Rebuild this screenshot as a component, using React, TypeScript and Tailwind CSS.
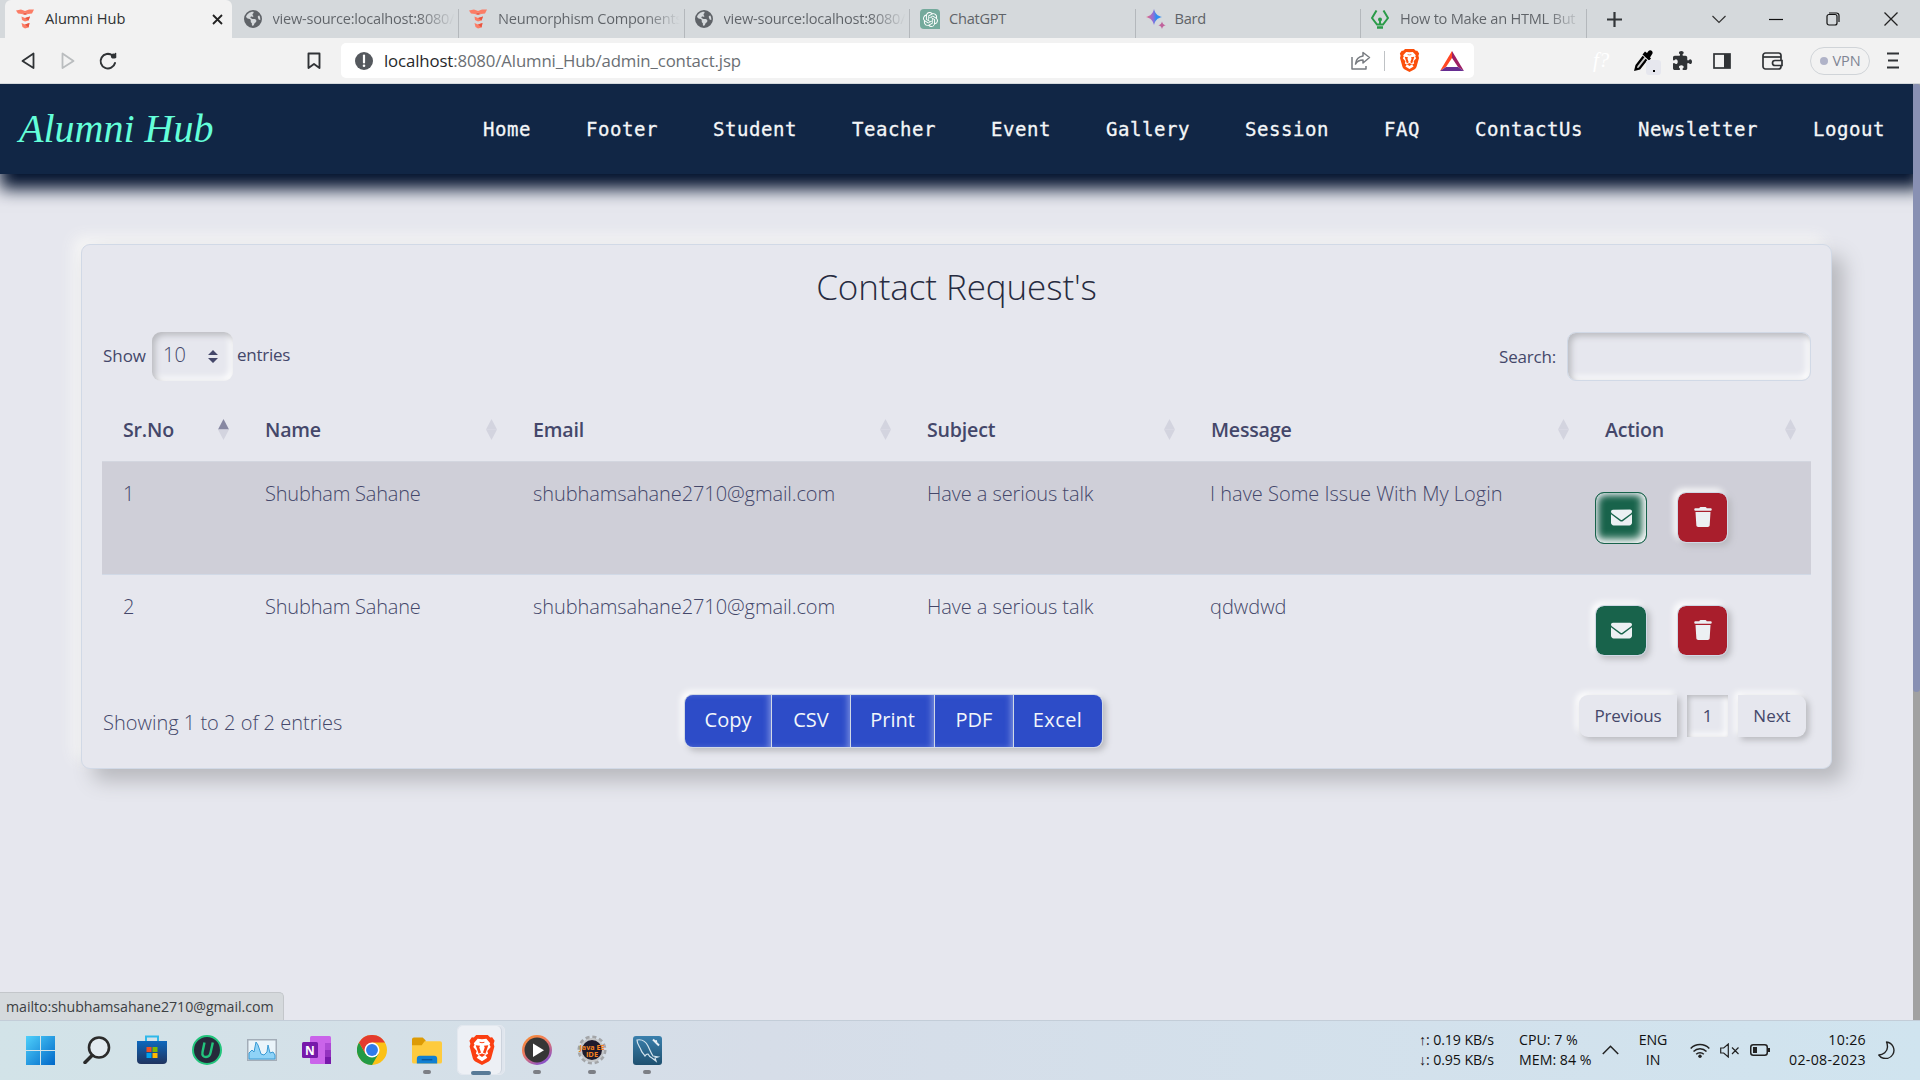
import React from "react";
import { FaEnvelope, FaTrash, FaEarthAmericas, FaPuzzlePiece } from "react-icons/fa6";
import { SiOpenai } from "react-icons/si";

const NAV = ["Home", "Footer", "Student", "Teacher", "Event", "Gallery", "Session", "FAQ", "ContactUs", "Newsletter", "Logout"];

function Creative() {
  return (
    <svg width="18" height="20" viewBox="0 0 18 20">
      <path d="M0 1.500 5 .5l4 1.500 4-1.500h5l-2 4-4 .5-3-1.500L6 5 2 4.500z" fill="#fb7d66" />
      <path d="M6 5l3-1.500L12 5l-3 1z" fill="#f05f49" />
      <path d="M5.500 7.500 9 9l5-1.500-1.500 4L9 12.500l-3-1.500z" fill="#fb7d66" />
      <path d="M9 9l5-1.500-1.500 4z" fill="#e8543f" />
      <path d="M5.500 14 9 15.500l4.500-1.500-1 4.500L9 19.500l-2.500-1.500z" fill="#fb7d66" />
      <path d="M9 15.500l4.500-1.500-1 4.500z" fill="#e8543f" />
    </svg>
  );
}
function Lion({ w, h, color }: { w: number; h: number; color: string }) {
  return (
    <svg width={w} height={h} viewBox="0 0 26 31">
      <path d="M7 0h12l2.500 2.500 2-.3L26 6l-1 3 .8 3-3.300 12c-.5 1.500-1.200 2.300-2.500 3.300L13 31l-7-3.700c-1.300-1-2-1.800-2.500-3.300L.2 12 1 9 0 6l2.500-3.800 2 .3z" fill={color} />
      <path d="M13 4.500 17.500 4l4 4.500-.8 1.500 1.300 2.500-3.500 4 .8 3-2.800 1.500 2 2.500L13 27l-5.500-3.500 2-2.500L6.700 19.500l.8-3-3.500-4L5.300 10l-.8-1.500 4-4.500z" fill="#fff" />
      <path d="M6.500 10.500 11 11l-.8 2L12 18l-2.500 1.500L8 15zM19.500 10.500 15 11l.8 2L14 18l2.500 1.500L18 15z" fill={color} />
      <path d="M9.500 20.500 13 19l3.500 1.500L13 22.800z" fill={color} />
      <path d="M10.500 7.500 13 8l2.500-.5" stroke={color} strokeWidth="1" fill="none" />
    </svg>
  );
}
function Globe() {
  return <FaEarthAmericas size={18} color="#5f6368" />;
}
function Gpt() {
  return (
    <span className="flex h-5 w-5 items-center justify-center rounded-[4px] rounded-br-none bg-[#74aa9c]">
      <SiOpenai size={15} color="#ffffff" />
    </span>
  );
}
function BardIcon() {
  return (
    <svg width="20" height="20" viewBox="0 0 20 20">
      <defs>
        <linearGradient id="bard" x1="0" x2="1">
          <stop offset="0" stopColor="#f0657a" />
          <stop offset=".45" stopColor="#8f6fd8" />
          <stop offset=".65" stopColor="#2f8df0" />
          <stop offset="1" stopColor="#3b8fee" />
        </linearGradient>
      </defs>
      <path d="M8 0c1.500 5 3 6.500 8 8-5 1.500-6.500 3-8 8-1.500-5-3-6.500-8-8 5-1.500 6.500-3 8-8z" fill="url(#bard)" />
      <path d="M16 12.500c.7 2.300 1.300 3 3.700 3.700-2.400.8-3 1.400-3.700 3.800-.7-2.400-1.300-3-3.700-3.800 2.400-.7 3-1.400 3.700-3.700z" fill="#c0629c" />
    </svg>
  );
}
function PenIcon() {
  return (
    <svg width="18" height="19" viewBox="0 0 18 19" fill="none" stroke="#2a9b48" strokeWidth="2">
      <path d="M5.500.5 1 8l5 6.500h6L17 8 12.500.5" />
      <circle cx="9" cy="9.500" r="2" fill="#2a9b48" stroke="none" />
      <path d="M9 10v5" />
      <path d="M6 17.500h6" strokeWidth="2.500" />
    </svg>
  );
}

function Tab({ icon, label, fade }: { icon: React.ReactNode; label: string; fade?: boolean }) {
  return (
    <div className="flex h-[38px] w-[225.5px] items-end">
      <div className="flex h-[38px] flex-1 items-center overflow-hidden pl-[10px]">
        <span className="flex w-[29px] shrink-0 items-center">{icon}</span>
        <span
          className={
            fade
              ? "w-[182px] overflow-hidden whitespace-nowrap bg-gradient-to-r from-[#5f6368] from-80% to-[#d5d9dc] bg-clip-text text-transparent"
              : "whitespace-nowrap text-[#5f6368]"
          }
        >
          {label}
        </span>
      </div>
      <div className="h-[29px] w-px bg-[#b4b8bc]" />
    </div>
  );
}

function BrowserTabs() {
  return (
    <div className="flex h-[38px] items-center bg-[#d5d9dc] text-[14.600px] tracking-[-0.25px]">
      <div className="ml-[5px] mr-[1.500px] flex h-[38px] w-[227px] items-center rounded-t-[6px] bg-[#f2f2f2] pl-[11px] text-[#303234]">
        <Creative />
        <span className="ml-[11px] tracking-[0px]">Alumni Hub</span>
        <svg className="ml-auto mr-[9px]" width="11" height="11" viewBox="0 0 11 11" stroke="#222" strokeWidth="1.800">
          <path d="M1 1l9 9M10 1l-9 9" />
        </svg>
      </div>
      <Tab icon={<Globe />} label="view-source:localhost:8080/" fade />
      <Tab icon={<Creative />} label="Neumorphism Components" fade />
      <Tab icon={<Globe />} label="view-source:localhost:8080/" fade />
      <Tab icon={<Gpt />} label="ChatGPT" />
      <Tab icon={<BardIcon />} label="Bard" />
      <Tab icon={<PenIcon />} label="How to Make an HTML But" fade />
      <svg className="ml-[20px]" width="15" height="15" viewBox="0 0 15 15" stroke="#333639" strokeWidth="2.200">
        <path d="M7.500 0v15M0 7.500h15" />
      </svg>
      <svg className="ml-auto" width="14" height="9" viewBox="0 0 14 9" fill="none" stroke="#333" strokeWidth="1.200">
        <path d="M.5 1 7 7.500 13.500 1" />
      </svg>
      <svg className="ml-[43px]" width="14" height="14" viewBox="0 0 14 14" stroke="#111" strokeWidth="1.200">
        <path d="M0 7.500h14" />
      </svg>
      <svg className="ml-[43px]" width="14" height="14" viewBox="0 0 14 14" fill="none" stroke="#111" strokeWidth="1.200">
        <rect x="1" y="2.500" width="10" height="10.500" rx="2" />
        <path d="M3 1h7.500a2.500 2.500 0 0 1 2.500 2.500V10" />
      </svg>
      <svg className="ml-[44px] mr-[22px]" width="14" height="14" viewBox="0 0 14 14" stroke="#222" strokeWidth="1.300">
        <path d="M.5.5l13 13M13.500.5l-13 13" />
      </svg>
    </div>
  );
}

function Toolbar() {
  return (
    <div className="flex h-[46px] items-center border-b border-[#d5d9dc] bg-[#f2f2f2]">
      <svg className="ml-[21px]" width="14" height="18" viewBox="0 0 14 18" fill="none" stroke="#303336" strokeWidth="1.800" strokeLinejoin="round">
        <path d="M12.500 1.500v14.500L1.500 9z" />
      </svg>
      <svg className="ml-[26px]" width="14" height="18" viewBox="0 0 14 18" fill="none" stroke="#babdbf" strokeWidth="1.800" strokeLinejoin="round">
        <path d="M1.500 1.500v14.500L12.500 9z" />
      </svg>
      <svg className="ml-[23px]" width="20" height="20" viewBox="0 0 20 20" fill="none" stroke="#303336" strokeWidth="2" strokeLinecap="round">
        <path d="M14.500 4.500A7.300 7.300 0 1 0 17 12" />
        <circle cx="15.500" cy="5" r="2.600" fill="#303336" stroke="none" />
        <path d="M17.500 2.500v4" strokeWidth="1.500" />
      </svg>
      <svg className="ml-[189px]" width="14" height="18" viewBox="0 0 14 18" fill="none" stroke="#303336" strokeWidth="1.900" strokeLinejoin="round">
        <path d="M1.500 1.500h11v14.500L7 12l-5.500 4z" />
      </svg>
      <div className="ml-[20px] flex h-[35px] w-[1133px] items-center rounded-[5px] bg-white pl-[14px]">
        <svg width="18" height="18" viewBox="0 0 18 18">
          <circle cx="9" cy="9" r="9" fill="#55595e" />
          <path d="M9 3.500v7" stroke="#fff" strokeWidth="2.200" strokeLinecap="round" />
          <circle cx="9" cy="13.700" r="1.300" fill="#fff" />
        </svg>
        <span className="ml-[11px] text-[16.800px] tracking-[-0.13px] text-[#6b6f74]">
          <span className="text-[#26282b]">localhost</span>:8080/Alumni_Hub/admin_contact.jsp
        </span>
        <svg className="ml-auto" width="20" height="19" viewBox="0 0 20 19" fill="none" stroke="#777b80" strokeWidth="1.500" strokeLinejoin="round">
          <path d="M1 6v12h14v-3" />
          <path d="M12 1.500l6.500 5-6.500 5.500V9C8 9 6 10.500 4.500 13 5 8 8 5.500 12 5z" />
        </svg>
        <div className="ml-[13px] mr-[14px] h-[20px] w-px bg-[#bfc2c5]" />
        <Lion w={21} h={23} color="#fb4f0c" />
        <svg className="ml-[20px] mr-[10px]" width="24" height="20" viewBox="0 0 24 20">
          <path d="M12 0 0 20l6-4 6-9z" fill="#ff4724" />
          <path d="M12 0l12 20-6-4-6-9z" fill="#9e1f63" />
          <path d="M0 20h24l-6-4H6z" fill="#662d91" />
        </svg>
      </div>
      <span className="ml-[119px] w-[20px] font-['Liberation_Serif'] text-[21px] italic text-white">f?</span>
      <div className="relative ml-[21px] h-[24px] w-[20px]">
        <svg width="20" height="23" viewBox="0 0 20 23">
          <path d="M11 2.500 13 4l1.500-2c1.500-2 5 0 4 2.500l-2.500 4 1 1-2 2-6.500-6z" fill="#000" />
          <path d="M9.500 7.500 2.500 16.500 1.500 20.500l4-1 7-9" fill="#c9c9c9" stroke="#000" strokeWidth="2.200" />
        </svg>
        <div className="absolute left-[12px] top-[11px] flex h-[15px] w-[15px] items-end justify-center rounded-[3px] bg-[#e6e7ee] pb-[3px]">
          <div className="h-[2px] w-[2px] bg-black" />
        </div>
      </div>
      <FaPuzzlePiece className="ml-[19px]" size={19} color="#303336" />
      <svg className="ml-[21px]" width="18" height="16" viewBox="0 0 18 16">
        <rect x="1" y="1" width="16" height="14" fill="none" stroke="#303336" strokeWidth="1.700" />
        <rect x="11" y="1" width="6" height="14" fill="#303336" />
      </svg>
      <svg className="ml-[31px]" width="21" height="18" viewBox="0 0 21 18" fill="none" stroke="#303336" strokeWidth="1.700">
        <rect x="1" y="1" width="18" height="16" rx="2.500" />
        <path d="M1 5h18" />
        <path d="M20 8.500h-7a2.500 2.500 0 0 0 0 5h7z" fill="#f2f2f2" />
      </svg>
      <div className="ml-[27px] flex h-[28px] w-[60px] items-center justify-center gap-[5px] rounded-full border-[1.500px] border-[#d0d4d8] text-[14.500px] tracking-[-0.1px] text-[#7f8594]">
        <div className="h-[8px] w-[8px] rounded-full bg-[#b0b3c8]" />
        VPN
      </div>
      <svg className="ml-[17px]" width="12" height="17" viewBox="0 0 12 17" stroke="#303336" strokeWidth="2">
        <path d="M0 1.500h12M1 8.500h10M0 15.500h12" />
      </svg>
    </div>
  );
}

const HEADS: { label: string; asc?: boolean }[] = [
  { label: "Sr.No", asc: true },
  { label: "Name" },
  { label: "Email" },
  { label: "Subject" },
  { label: "Message" },
  { label: "Action" },
];

const ROWS = [
  { n: "1", name: "Shubham Sahane", email: "shubhamsahane2710@gmail.com", subject: "Have a serious talk", msg: "I have Some Issue With My Login" },
  { n: "2", name: "Shubham Sahane", email: "shubhamsahane2710@gmail.com", subject: "Have a serious talk", msg: "qdwdwd" },
];

function TableCard() {
  return (
    <section className="ml-[81px] mt-[70px] flex h-[525px] w-[1751px] flex-col rounded-[9px] border border-[#d1d9e6] bg-[#e6e7ee] px-[20px] text-[#44476a] shadow-[12px_12px_20px_#b8b9be,-8px_-8px_14px_#f5f5f5]">
      <h2 className="mt-[21px] text-center text-[35px] font-[340] leading-[42px] tracking-[-0.1px] text-[#262b40]">Contact Request's</h2>
      <div className="mt-[24px] flex h-[49px] items-center text-[17px]">
        <span className="mb-[2px] w-[50px] pl-px tracking-[-0.05px]">Show</span>
        <div className="flex h-[49px] w-[81px] items-center rounded-[9px] pl-[11px] pr-[15px] pb-[3px] text-[20px] font-light shadow-[inset_3px_3px_6px_#b8b9be,inset_-3px_-3px_7px_#fff]">
          10
          <svg className="ml-auto mt-[3px]" width="10" height="13" viewBox="0 0 10 13" fill="#44476a">
            <path d="M5 0l5 5H0zM5 13l5-5H0z" />
          </svg>
        </div>
        <span className="mb-[3px] ml-[4px] tracking-[-0.25px]">entries</span>
        <span className="ml-auto mr-[11px] tracking-[-0.2px]">Search:</span>
        <div className="h-[49px] w-[244px] rounded-[9px] border border-[#d1d9e6] shadow-[inset_3px_3px_6px_#b8b9be,inset_-3px_-3px_7px_#fff]" />
      </div>

      <div className="mt-[16px] grid h-[64px] grid-cols-[142px_268px_394px_284px_394px_227px] items-center text-[19.600px] font-semibold">
        {HEADS.map((h) => (
          <div key={h.label} className="flex items-center justify-between pl-[21px] pr-[15px] pt-px">
            <span className="tracking-[-0.2px]">{h.label}</span>
            <svg width="11" height="21" viewBox="0 0 11 21">
              <path d="M5.500 0 11 10.500H0z" fill={h.asc ? "#8788a2" : "#d3d4df"} />
              <path d="M5.500 21 11 10.500H0z" fill="#d3d4df" />
            </svg>
          </div>
        ))}
      </div>
      {ROWS.map((r, i) => (
        <div
          key={r.n}
          className={
            i === 0
              ? "grid h-[114px] grid-cols-[142px_268px_394px_284px_394px_227px] border-b border-t border-b-[#d1d9e6] border-t-[#d3d6df] bg-[#cfcfd8] text-[20px] font-light leading-[30px]"
              : "grid h-[113px] grid-cols-[142px_268px_394px_284px_394px_227px] text-[20px] font-light leading-[30px]"
          }
        >
          <span className="pl-[21px] pt-[17px]">{r.n}</span>
          <span className="pl-[21px] pt-[17px] tracking-[-0.2px]">{r.name}</span>
          <span className="pl-[21px] pt-[17px] tracking-[-0.1px]">{r.email}</span>
          <span className="pl-[21px] pt-[17px] tracking-[-0.1px]">{r.subject}</span>
          <span className="pl-[20px] pt-[17px]">{r.msg}</span>
          <div className="flex pl-[11px] pt-[30px]">
            {i === 0 ? (
              <button className="flex h-[52px] w-[52px] items-center justify-center rounded-[9px] border border-[#18634b] bg-[#18634b] pb-[2px] shadow-[inset_2px_2px_7px_#e6e7ee,inset_-4px_-4px_9px_#fff]">
                <FaEnvelope size={21} color="#ecf0f3" />
              </button>
            ) : (
              <button className="flex h-[51px] w-[52px] items-center justify-center rounded-[9px] border border-[#d1d9e6] bg-[#18634b] bg-clip-padding pb-px shadow-[3px_3px_6px_#b8b9be,-3px_-3px_6px_#fff]">
                <FaEnvelope size={21} color="#ecf0f3" />
              </button>
            )}
            <button className="ml-[30px] flex h-[51px] w-[51px] items-center justify-center rounded-[9px] border border-[#d1d9e6] bg-[#a91e2c] bg-clip-padding pb-px shadow-[3px_3px_6px_#b8b9be,-3px_-3px_6px_#fff]">
              <FaTrash size={20} color="#ecf0f3" />
            </button>
          </div>
        </div>
      ))}

      <div className="mt-[6px] flex">
        <div className="w-[582px] pl-px pt-[14px] text-[20px] font-light leading-[30px]">Showing 1 to 2 of 2 entries</div>
        <div className="flex h-[54px] w-[419px] rounded-[9px] border border-[#d1d9e6] text-[20px] text-[#f3f7fa] shadow-[3px_3px_6px_#b8b9be,-3px_-3px_6px_#fff]">
          <button className="w-[86px] rounded-l-[8px] bg-[#2d4cc8] pb-[3px] shadow-[inset_-4px_0_6px_-2px_#7c90e0]">Copy</button>
          <button className="w-[79px] border-l border-[#d1d9e6] bg-[#2d4cc8] pb-[3px] shadow-[inset_-4px_0_6px_-2px_#7c90e0]">CSV</button>
          <button className="w-[84px] border-l border-[#d1d9e6] bg-[#2d4cc8] pb-[3px] shadow-[inset_-4px_0_6px_-2px_#7c90e0]">Print</button>
          <button className="w-[79px] border-l border-[#d1d9e6] bg-[#2d4cc8] pb-[3px] shadow-[inset_-4px_0_6px_-2px_#7c90e0]">PDF</button>
          <button className="flex-1 rounded-r-[8px] border-l border-[#d1d9e6] bg-[#2d4cc8] pb-[3px] pr-px tracking-[0.4px]">Excel</button>
        </div>
        <div className="ml-auto mr-[5px] mt-px flex h-[42px] gap-[10px] text-[17px]">
          <button className="w-[98px] rounded-l-[9px] bg-[#e6e7ee] tracking-[-0.15px] shadow-[3px_3px_6px_#b8b9be,-3px_-3px_6px_#fff]">Previous</button>
          <button className="w-[41px] shadow-[inset_2px_2px_5px_#b8b9be,inset_-3px_-3px_7px_#fff]">1</button>
          <button className="w-[68px] rounded-r-[9px] bg-[#e6e7ee] shadow-[3px_3px_6px_#b8b9be,-3px_-3px_6px_#fff]">Next</button>
        </div>
      </div>
    </section>
  );
}

function Page() {
  return (
    <div className="relative flex h-[936px] bg-[#e6e7ee]">
      <div className="h-full flex-1 overflow-hidden">
        <nav className="relative flex h-[90px] items-center bg-[#112645] pl-[19px] pr-[28px] shadow-[5px_10px_16px_5px_#05142f]">
          <span className="font-['Liberation_Serif'] text-[40px] italic leading-none text-[#64ffda]">Alumni Hub</span>
          <ul className="ml-auto flex gap-[55px] font-['DejaVu_Sans_Mono'] text-[19px] tracking-[0.56px] text-[#f4f6f8] [-webkit-text-stroke:0.3px_#f4f6f8]">
            {NAV.map((n) => (
              <li key={n}>{n}</li>
            ))}
          </ul>
        </nav>
        <TableCard />
      </div>
      <div className="h-full w-[7px] bg-[#a1a1a1]">
        <div className="h-[608px] rounded-b-[4px] rounded-t-[3px] bg-[#8890b3]" />
      </div>
      <div className="absolute bottom-0 left-0 flex h-[28px] w-[284px] items-center rounded-tr-[5px] border-r border-t border-[#c3c6ca] bg-[#d5d9dc] pl-[6px] text-[14.200px] tracking-[-0.05px] text-[#3c4043]">
        mailto:shubhamsahane2710@gmail.com
      </div>
    </div>
  );
}

function Item({ cls, dot, children }: { cls: string; dot?: boolean; children: React.ReactNode }) {
  return (
    <div className={"relative flex h-[60px] w-[30px] items-center justify-center " + cls}>
      {children}
      {dot && <span className="absolute bottom-[6px] left-[11px] h-[4px] w-[8px] rounded-full bg-[#7c7f85]" />}
    </div>
  );
}

function Taskbar() {
  return (
    <div className="flex h-[60px] items-center bg-gradient-to-r from-[#d2e3e8] via-[#d6dde8] via-40% to-[#d0e4ef] shadow-[inset_0_1px_0_#c3cdd8]">
      <Item cls="ml-[25px]">
        <svg width="29" height="29" viewBox="0 0 29 29">
          <defs>
            <linearGradient id="win" x1="0" y1="0" x2="1" y2="1">
              <stop offset="0" stopColor="#4fd0fb" />
              <stop offset="1" stopColor="#0067c8" />
            </linearGradient>
          </defs>
          <path d="M0 0h14v14H0zM15 0h14v14H15zM0 15h14v14H0zM15 15h14v14H15z" fill="url(#win)" />
        </svg>
      </Item>
      <Item cls="ml-[27px]">
        <svg width="28" height="28" viewBox="0 0 28 28" fill="none" stroke="#2b2b2b">
          <circle cx="16" cy="11.500" r="10" strokeWidth="2.600" fill="#e3ebf1" />
          <path d="M9 19.500 2 26.500" strokeWidth="3.500" strokeLinecap="round" />
        </svg>
      </Item>
      <Item cls="ml-[25px]">
        <svg width="30" height="30" viewBox="0 0 30 30">
          <defs>
            <linearGradient id="store" x1="0" y1="0" x2="0" y2="1">
              <stop offset="0" stopColor="#0d68bd" />
              <stop offset="1" stopColor="#20345f" />
            </linearGradient>
          </defs>
          <path d="M9 6V1.500h12V6" fill="none" stroke="#2fb8ea" strokeWidth="2" />
          <path d="M0 6h30v19a4 4 0 0 1-4 4H4a4 4 0 0 1-4-4z" fill="url(#store)" />
          <path d="M9.500 12h5v5h-5z" fill="#f25022" />
          <path d="M15.500 12h5v5h-5z" fill="#7fba00" />
          <path d="M9.500 18h5v5h-5z" fill="#00a4ef" />
          <path d="M15.500 18h5v5h-5z" fill="#ffb900" />
        </svg>
      </Item>
      <Item cls="ml-[25px]">
        <svg width="30" height="30" viewBox="0 0 30 30">
          <circle cx="15" cy="15" r="14" fill="#262b3b" stroke="#22c57c" strokeWidth="2" />
          <path d="M12.500 7.500 10.500 17c-.8 4 1.500 5 3.500 5s4-1.500 4.600-4.500l2.200-10" fill="none" stroke="#22c57c" strokeWidth="2.400" />
        </svg>
      </Item>
      <Item cls="ml-[25px]">
        <svg width="30" height="22" viewBox="0 0 30 22">
          <rect x=".75" y=".75" width="28.500" height="20.500" fill="#eaf4fa" stroke="#a3adb8" strokeWidth="1.500" />
          <path d="M2 14l3-3 2 2 2-10 2 3 3 9 3 1 3-3 1-7 2 8 3-1 2 3v4H2z" fill="#8fd3f7" stroke="#3a9ad4" />
        </svg>
      </Item>
      <Item cls="ml-[25px]">
        <svg width="30" height="28" viewBox="0 0 30 28">
          <rect x="8" width="21" height="28" rx="1.500" fill="#ca64ea" />
          <path d="M23 7h6v7h-6z" fill="#ae4bd5" />
          <path d="M23 14h6v7h-6z" fill="#9332bf" />
          <path d="M23 21h6v7h-6z" fill="#7719aa" />
          <rect y="6" width="16" height="16" rx="1.500" fill="#7719aa" />
          <text x="8" y="18.500" textAnchor="middle" fontFamily="Open Sans" fontWeight="700" fontSize="12" fill="#fff">N</text>
        </svg>
      </Item>
      <Item cls="ml-[25px]">
        <svg width="30" height="30" viewBox="0 0 48 48">
          <circle cx="24" cy="24" r="24" fill="#fbc116" />
          <path d="M3.200 12A24 24 0 0 0 24 48l10.400-18L24 24 13.600 30z" fill="#229a45" />
          <path d="M24 24 13.600 30 3.200 12A24 24 0 0 1 44.800 12H24z" fill="#e33b2e" />
          <circle cx="24" cy="24" r="12" fill="#fff" />
          <circle cx="24" cy="24" r="9.500" fill="#2f7bea" />
        </svg>
      </Item>
      <Item cls="ml-[25px]" dot>
        <svg width="31" height="27" viewBox="0 0 31 27">
          <path d="M0 2a2 2 0 0 1 2-2h9l3 3v6H0z" fill="#dd9b05" />
          <path d="M0 8h10l3-4h16a2 2 0 0 1 2 2v19a2 2 0 0 1-2 2H2a2 2 0 0 1-2-2z" fill="#fecb3e" />
          <path d="M5 27v-5a3 3 0 0 1 3-3h15a3 3 0 0 1 3 3v5z" fill="#1180d2" />
          <path d="M10 23h11" stroke="#0a589c" strokeWidth="1.500" />
        </svg>
      </Item>
      <div className="relative ml-[15px] flex h-[50px] w-[48px] rounded-[5px] border border-[#e3e8ef] bg-[#dfe5ed]">
        <div className="flex h-[48px] w-[44px] items-center justify-center rounded-[5px] border-r border-[#ccd3dd] bg-[#edf0f5] pl-[4px]">
          <Lion w={26} h={30} color="#fb3f12" />
        </div>
        <span className="absolute bottom-[-1px] left-[13px] h-[4px] w-[20px] rounded-full bg-[#587a97]" />
      </div>
      <Item cls="ml-[17px]" dot>
        <svg width="30" height="30" viewBox="0 0 30 30">
          <defs>
            <linearGradient id="media" x1="0" y1="0" x2=".6" y2="1">
              <stop offset="0" stopColor="#f7902f" />
              <stop offset=".5" stopColor="#ef7a60" />
              <stop offset="1" stopColor="#8a51c8" />
            </linearGradient>
          </defs>
          <circle cx="15" cy="15" r="15" fill="url(#media)" />
          <circle cx="15" cy="15" r="12.500" fill="#363636" />
          <path d="M11 8.500v13.500l11-6.700z" fill="#fff" />
        </svg>
      </Item>
      <Item cls="ml-[25px]" dot>
        <svg width="30" height="30" viewBox="0 0 30 30">
          <circle cx="15" cy="15" r="13" fill="none" stroke="#a3a5a8" strokeWidth="3" strokeDasharray="4 2.800" />
          <circle cx="15" cy="15" r="11" fill="#1e1a2c" stroke="#c4c6c8" strokeWidth="2" />
          <text x="15" y="14.500" textAnchor="middle" textLength="25" lengthAdjust="spacingAndGlyphs" fontFamily="Open Sans" fontWeight="700" fontSize="7.500" fill="#f58220">Java EE</text>
          <text x="15" y="21.500" textAnchor="middle" fontFamily="Open Sans" fontWeight="700" fontSize="7.500" fill="#f58220">IDE</text>
        </svg>
      </Item>
      <Item cls="ml-[25px]" dot>
        <svg width="29" height="29" viewBox="0 0 29 29">
          <defs>
            <linearGradient id="sql" x1="0" y1="0" x2="0" y2="1">
              <stop offset="0" stopColor="#3a80ad" />
              <stop offset="1" stopColor="#1f506f" />
            </linearGradient>
          </defs>
          <rect width="29" height="29" rx="3" fill="url(#sql)" />
          <path d="M4 4c5-1 9 2 11 6s3 7 5 10l5 1-3 1 1 3-4-3c-2-1-3-2-4-4-2 0-2 1-3 2-1-2-3-3-4-6S4 8 4 4z" fill="none" stroke="#d4e4ee" strokeWidth="1.200" />
          <path d="M20 3.500l2 2 2-.5M22 5.500l4 4" stroke="#e8f0f5" strokeWidth="2" fill="none" />
        </svg>
      </Item>

      <div className="ml-auto flex items-center text-[14.200px] leading-[20.500px] tracking-[-0.1px] text-[#111]">
        <div className="w-[100px] whitespace-nowrap">
          <div>↑: 0.19 KB/s</div>
          <div>↓: 0.95 KB/s</div>
        </div>
        <div className="w-[83px] whitespace-nowrap tracking-[0px]">
          <div>CPU: 7 %</div>
          <div>MEM: 84 %</div>
        </div>
        <svg width="17" height="10" viewBox="0 0 17 10" fill="none" stroke="#222" strokeWidth="1.500">
          <path d="M.8 9 8.500 1.200 16.200 9" />
        </svg>
        <div className="ml-[17px] w-[34px] text-center">
          <div>ENG</div>
          <div>IN</div>
        </div>
        <svg className="ml-[20px]" width="20" height="15" viewBox="0 0 20 15" fill="none" stroke="#222" strokeWidth="1.500">
          <path d="M.7 5.500a13 13 0 0 1 18.600 0M3.500 8.500a9 9 0 0 1 13 0M6.200 11.200a5.400 5.400 0 0 1 7.600 0" />
          <circle cx="10" cy="13.200" r="1.700" fill="#222" stroke="none" />
        </svg>
        <svg className="ml-[10px]" width="20" height="15" viewBox="0 0 20 15" fill="none" stroke="#222" strokeWidth="1.200">
          <path d="M.7 5v5h3l4.600 4V1L3.700 5zM12 4.500l6.500 6.500M18.500 4.500 12 11" />
        </svg>
        <svg className="ml-[10px]" width="20" height="12" viewBox="0 0 20 12">
          <rect x=".75" y=".75" width="16.500" height="10.500" rx="2.500" fill="none" stroke="#222" strokeWidth="1.500" />
          <path d="M3 3h4v6H3zM18 4h2v4h-2z" fill="#222" />
        </svg>
        <div className="ml-[8px] w-[88px] text-right tracking-[0.3px]">
          <div>10:26</div>
          <div>02-08-2023</div>
        </div>
        <svg className="ml-[12px] mr-[24px]" width="18" height="18" viewBox="0 0 18 18" fill="none" stroke="#222" strokeWidth="1.400" strokeLinejoin="round">
          <path d="M8.500 1a8.300 8.300 0 1 1-7.700 13C5 14 9.500 10.500 9.500 6 9.500 4 9.300 2.500 8.500 1z" />
        </svg>
      </div>
    </div>
  );
}

export default function App() {
  return (
    <div className="h-[1080px] w-[1920px] overflow-hidden font-['Open_Sans',sans-serif]">
      <BrowserTabs />
      <Toolbar />
      <Page />
      <Taskbar />
    </div>
  );
}
